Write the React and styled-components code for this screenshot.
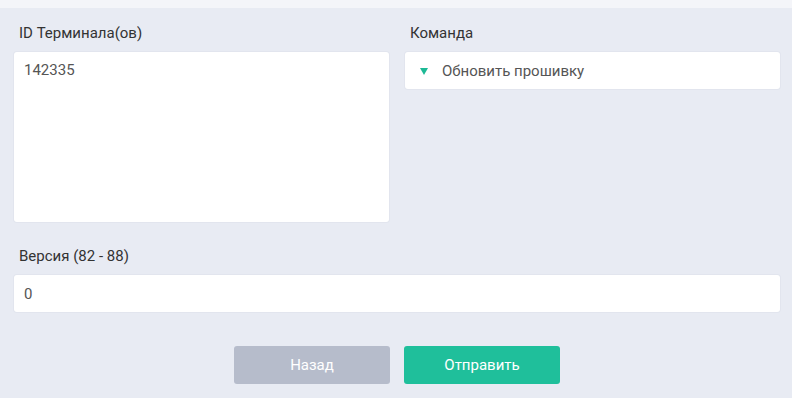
import React from 'react'
import styled, { createGlobalStyle } from 'styled-components'

const GlobalStyle = createGlobalStyle`
  html, body {
    margin: 0;
    padding: 0;
    background: #e8ebf3;
    font-family: Roboto, "Liberation Sans", sans-serif;
  }
`

const TopStrip = styled.div`
  height: 8px;
  background: #f4f5f9;
`

const Form = styled.div`
  padding: 16px 12px 0 14px;
`

const Grid = styled.div`
  display: grid;
  grid-template-columns: 375px 375px;
  column-gap: 16px;
`

const Field = styled.div`
  display: flex;
  flex-direction: column;
  margin-top: ${p => p.$top || 0}px;
`

const Label = styled.label`
  font-size: 15px;
  line-height: 18px;
  color: #333;
  padding-left: 5px;
  margin-bottom: 10px;
`

const Box = styled.div`
  background: #fff;
  border-radius: 3px;
  box-shadow: 0 0 0 1px #e2e5ee;
  font-size: 15px;
  color: #555;
  box-sizing: border-box;
`

const Area = styled(Box)`
  height: 170px;
  padding: 9px 10px;
  line-height: 18px;
`

const Input = styled(Box)`
  height: 37px;
  padding: 0 10px;
  display: flex;
  align-items: center;
`

const Select = styled(Box)`
  height: 37px;
  padding: 0 15px;
  display: flex;
  align-items: center;
  gap: 14px;
`

const Arrow = styled.span`
  width: 0;
  height: 0;
  border-left: 4px solid transparent;
  border-right: 4px solid transparent;
  border-top: 7px solid #1db995;
  margin-top: 1px;
`

const Actions = styled.div`
  display: flex;
  justify-content: center;
  gap: 14px;
  margin-top: 34px;
`

const Button = styled.button`
  width: 156px;
  height: 38px;
  border: none;
  border-radius: 3px;
  font-family: inherit;
  font-size: 15px;
  font-weight: 400;
  color: #fff;
  background: ${p => (p.$primary ? '#1fbf9b' : '#b6bccb')};
  cursor: pointer;
`

export default function App() {
  return (
    <>
      <GlobalStyle />
      <TopStrip />
      <Form>
        <Grid>
          <Field>
            <Label>ID Терминала(ов)</Label>
            <Area>142335</Area>
          </Field>
          <Field>
            <Label>Команда</Label>
            <Select>
              <Arrow />
              <span>Обновить прошивку</span>
            </Select>
          </Field>
        </Grid>
        <Field $top={25}>
          <Label>Версия (82 - 88)</Label>
          <Input>0</Input>
        </Field>
        <Actions>
          <Button>Назад</Button>
          <Button $primary>Отправить</Button>
        </Actions>
      </Form>
    </>
  )
}
